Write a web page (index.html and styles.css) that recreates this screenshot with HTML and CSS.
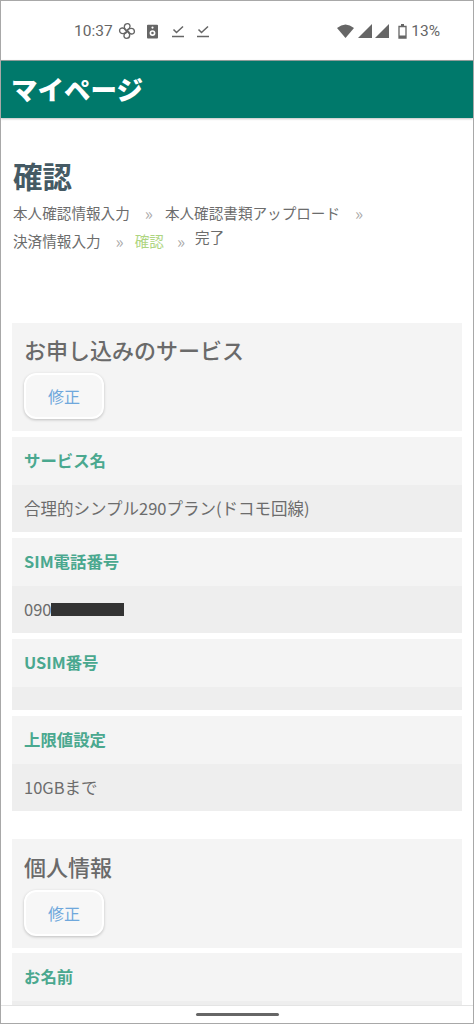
FILE: index.html
```html
<!DOCTYPE html>
<html lang="ja">
<head>
<meta charset="utf-8">
<title>マイページ</title>
<link rel="stylesheet" href="styles.css">
</head>
<body>
<div class="frame">
  <div class="status">
    <div class="status-left">
      <span class="time">10:37</span>
      <svg class="ic fan" width="18" height="18" viewBox="0 0 17 17" fill="none" stroke="#666" stroke-width="1.300"><path d="M8.500 8.500C6 8 6 6 6 4.500 6 2.500 7.500 1.500 9 1.500c1.800 0 2.500 1.500 2.300 3-.2 1.500-1.300 3-2.800 4Z"/><path d="M8.500 8.500c.5-2.500 2.500-2.500 4-2.500 2 0 3 1.500 3 3 0 1.800-1.500 2.500-3 2.300-1.500-.2-3-1.300-4-2.800Z"/><path d="M8.500 8.500c2.500.5 2.500 2.500 2.500 4 0 2-1.500 3-3 3-1.800 0-2.500-1.500-2.300-3 .2-1.500 1.300-3 2.800-4Z"/><path d="M8.500 8.500c-.5 2.500-2.500 2.500-4 2.500-2 0-3-1.500-3-3 0-1.800 1.500-2.500 3-2.300 1.500.2 3 1.300 4 2.800Z"/></svg>
      <svg class="ic spk" width="11" height="15" viewBox="0 0 12 15"><path fill="#666" fill-rule="evenodd" d="M1 0h10a1 1 0 0 1 1 1v13a1 1 0 0 1-1 1H1a1 1 0 0 1-1-1V1a1 1 0 0 1 1-1ZM6 6a3.200 3.200 0 1 0 0 6.400A3.200 3.200 0 0 0 6 6Zm0 1.800a1.400 1.400 0 1 1 0 2.800 1.400 1.400 0 0 1 0-2.800ZM6 2a1.200 1.200 0 1 0 0 2.400A1.200 1.200 0 0 0 6 2Z"/></svg>
      <svg class="ic chk" width="14" height="14" viewBox="0 0 14 14" fill="none" stroke="#666" stroke-width="1.500"><path d="M2.500 5.500 5.500 8.500 12 2.500"/><path d="M1 12.500h12"/></svg>
      <svg class="ic chk" width="14" height="14" viewBox="0 0 14 14" fill="none" stroke="#666" stroke-width="1.500"><path d="M2.500 5.500 5.500 8.500 12 2.500"/><path d="M1 12.500h12"/></svg>
    </div>
    <div class="status-right">
      <svg class="wifi" width="17" height="14" viewBox="0 0 17 14"><path fill="#666" d="M0 4Q8.500-3 17 4L8.500 14Z"/></svg>
      <svg width="14" height="14" viewBox="0 0 14 14"><path fill="#666" d="M14 0V14H0Z"/></svg>
      <svg width="14" height="14" viewBox="0 0 14 14"><path fill="#666" d="M14 0V14H0Z"/></svg>
      <svg class="bat" width="9" height="15" viewBox="0 0 9 15"><path fill="none" stroke="#666" stroke-width="1.300" d="M1 2.500h7v11.500H1Z"/><path fill="#666" d="M3 0h3v2H3ZM1 11.500h7V14H1Z"/></svg>
      <span class="pct">13%</span>
    </div>
  </div>
  <header class="appbar">マイページ</header>
  <main class="content">
    <h1 class="title">確認</h1>
    <div class="crumbs">
      <div class="crumb-line">
        <span>本人確認情報入力</span><span class="sep wide">»</span><span>本人確認書類アップロード</span><span class="sep wide">»</span>
      </div>
      <div class="crumb-line">
        <span>決済情報入力</span><span class="sep">»</span><span class="current">確認</span><span class="sep">»</span><span class="raised">完了</span>
      </div>
    </div>

    <section class="head">
      <h2>お申し込みのサービス</h2>
      <button class="edit">修正</button>
    </section>
    <dl class="item"><dt>サービス名</dt><dd>合理的シンプル290プラン(ドコモ回線)</dd></dl>
    <dl class="item"><dt>SIM電話番号</dt><dd>090<span class="mask"></span></dd></dl>
    <dl class="item"><dt>USIM番号</dt><dd class="empty"></dd></dl>
    <dl class="item"><dt>上限値設定</dt><dd>10GBまで</dd></dl>

    <section class="head second">
      <h2>個人情報</h2>
      <button class="edit">修正</button>
    </section>
    <dl class="item"><dt>お名前</dt><dd></dd></dl>
  </main>
  <div class="navbar"><span class="pill"></span></div>
</div>
</body>
</html>
```
FILE: styles.css
```css
* { box-sizing: border-box; }
html, body { margin: 0; padding: 0; background: #fff; }
body { font-family: "Noto Sans CJK JP", "Noto Sans", sans-serif; }
.frame {
  position: relative;
  width: 474px;
  height: 1024px;
  overflow: hidden;
  border: 1px solid #a8a8a8;
  background: #fff;
}
.status {
  height: 59px;
  display: flex;
  justify-content: space-between;
  align-items: center;
  padding: 1px 33px 0 73px;
  color: #666;
  font-family: Roboto, sans-serif;
  font-size: 15.5px;
}
.status-left, .status-right { display: flex; align-items: center; }
.fan { margin-left: 5px; }
.ic.spk { margin: 0 2px 0 11px; }
.ic.chk { margin-left: 11px; }
.status-right { gap: 3px; }
.wifi { margin-right: 1px; }
.bat { margin: 0 1px 0 6px; }
.appbar {
  height: 58px;
  background: #00796b;
  border-top: 1px solid #8f9c99;
  box-shadow: 0 1px 2px rgba(0,0,0,.25);
  color: #fff;
  font-size: 26.5px;
  font-weight: 900;
  line-height: 56px;
  padding-left: 10px;
}
.content { padding: 0 11px; }
.title {
  margin: 39px 0 0;
  padding-left: 1px;
  font-size: 29.5px;
  font-weight: 700;
  line-height: 36px;
  color: #455a64;
}
.crumbs {
  margin-top: 8px;
  padding-left: 1px;
  font-size: 14.6px;
  color: #6c6c6c;
  height: 122px;
}
.crumb-line { height: 28px; line-height: 24px; display: flex; }
.sep { color: #aaa; margin: 0 11px 0 15px; font-size: 17px; }
.sep.wide { margin: 0 12px 0 15px; }
.current { color: #aed581; margin-right: -2px; }
.raised { position: relative; top: -4px; margin-left: -1px; }
.head {
  height: 108px;
  background: #f4f4f4;
  padding: 10px 12px 0;
  margin-bottom: 6px;
}
.head.second { height: 109px; padding-top: 11px; margin-top: 28px; margin-bottom: 5px; }
.head h2 {
  margin: 0;
  font-size: 22px;
  font-weight: 500;
  line-height: 32px;
  color: #6a6a6a;
}
.edit {
  display: block;
  margin-top: 8px;
  width: 80px;
  height: 46px;
  background: #f7f7f7;
  border: 2px solid #fff;
  border-radius: 12px;
  box-shadow: 0 1px 3px rgba(0,0,0,.22);
  color: #6fa8dc;
  font: 400 16px "Noto Sans CJK JP", sans-serif;
  padding: 0;
}
.item { margin: 0 0 6px; }
.item dt {
  height: 48px;
  background: #f4f4f4;
  padding-left: 12px;
  line-height: 46px;
  color: #4aa88f;
  font-size: 16.4px;
  font-weight: 700;
}
.item dd {
  margin: 0;
  height: 47px;
  background: #eeeeee;
  padding-left: 12px;
  line-height: 47px;
  color: #6c6c6c;
  font-size: 16.5px;
  display: flex;
  align-items: center;
}
.item dd.empty { height: 23px; }
.mask { width: 73px; height: 13px; background: #333; }
.navbar {
  position: absolute;
  left: 0;
  right: 0;
  bottom: 0;
  height: 18px;
  background: #fff;
  border-top: 1px solid #e4e4e4;
  display: flex;
  justify-content: center;
  align-items: flex-start;
}
.pill {
  margin-top: 7px;
  width: 83px;
  height: 3px;
  border-radius: 2px;
  background: #666;
}
```
